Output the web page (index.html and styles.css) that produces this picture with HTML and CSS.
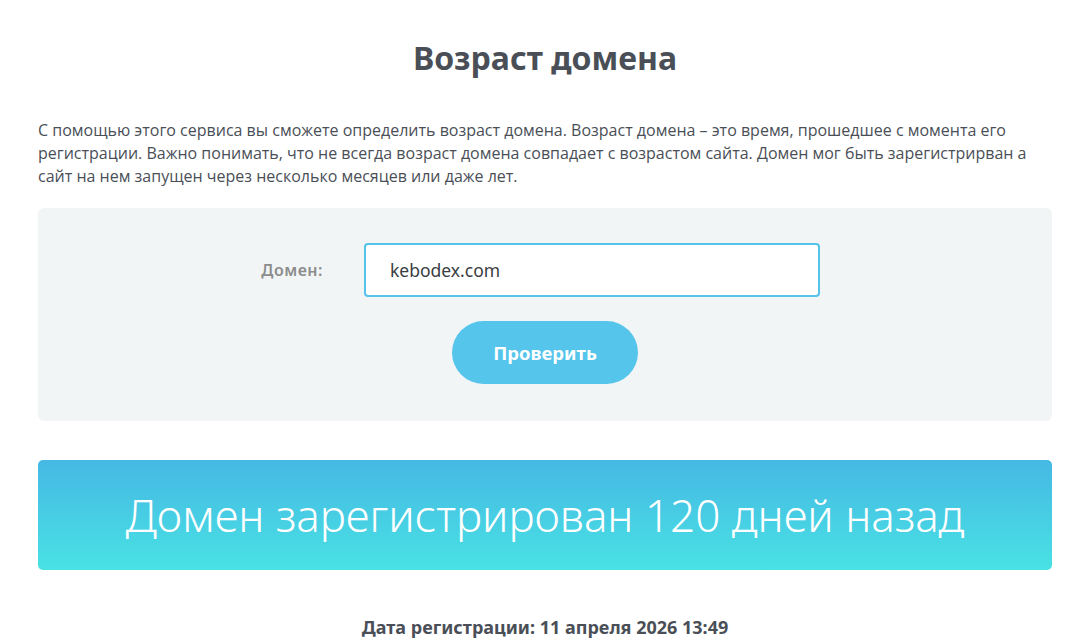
FILE: index.html
```html
<!DOCTYPE html>
<html lang="ru">
<head>
<meta charset="utf-8">
<link rel="stylesheet" href="styles.css">
</head>
<body>
<main class="page">
  <h1 class="title">Возраст домена</h1>
  <p class="intro">С помощью этого сервиса вы сможете определить возраст домена. Возраст домена – это время, прошедшее с момента его регистрации. Важно понимать, что не всегда возраст домена совпадает с возрастом сайта. Домен мог быть зарегистрирван а сайт на нем запущен через несколько месяцев или даже лет.</p>
  <form class="checker">
    <div class="field">
      <label class="label" for="domain">Домен:</label>
      <input class="input" id="domain" type="text" value="kebodex.com">
    </div>
    <button class="btn" type="button">Проверить</button>
  </form>
  <div class="result">Домен зарегистрирован 120 дней назад</div>
  <p class="date">Дата регистрации: 11 апреля 2026 13:49</p>
</main>
</body>
</html>
```
FILE: styles.css
```css
* { box-sizing: border-box; }
html, body { margin: 0; padding: 0; background: #fff; }
body { font-family: "Open Sans", "Noto Sans", sans-serif; color: #4a4f57; }
.page { width: 1014px; margin: 0 0 0 38px; padding-top: 37px; }
.title {
  margin: 0;
  text-align: center;
  font-family: "Noto Sans", sans-serif;
  font-weight: 700;
  font-size: 32px;
  line-height: 42px;
  color: #4a4f57;
}
.intro {
  margin: 40px 0 0;
  font-size: 16px;
  line-height: 23px;
}
.checker {
  margin-top: 20px;
  background: #f2f5f6;
  border-radius: 6px;
  height: 213px;
  padding-top: 35px;
  display: flex;
  flex-direction: column;
  align-items: center;
}
.field {
  width: 550px;
  display: flex;
  align-items: center;
  justify-content: flex-end;
}
.label {
  flex-shrink: 0;
  margin-right: 41px;
  font-family: "Noto Sans", sans-serif;
  font-weight: 600;
  font-size: 16px;
  letter-spacing: 0.5px;
  color: #8c8c8c;
}
.input {
  flex-shrink: 0;
  width: 456px;
  height: 54px;
  border: 2px solid #55c3ea;
  border-radius: 4px;
  padding: 0 24px;
  font-family: "Noto Sans", sans-serif;
  font-size: 17.5px;
  color: #3a3d42;
  background: #fff;
  outline: none;
}
.btn {
  margin-top: 24px;
  width: 186px;
  height: 63px;
  border: 0;
  border-radius: 32px;
  background: #55c5ec;
  color: #fff;
  font-family: "Noto Sans", sans-serif;
  font-weight: 700;
  font-size: 18.5px;
}
.result {
  margin-top: 39px;
  height: 110px;
  border-radius: 5px;
  background: linear-gradient(180deg, #46b8e4 0%, #48e2e4 100%);
  color: #fff;
  display: flex;
  align-items: center;
  justify-content: center;
  font-family: "Noto Sans", sans-serif;
  font-weight: 300;
  font-size: 44px;
}
.date {
  margin: 45px 0 0;
  text-align: center;
  font-family: "Noto Sans", sans-serif;
  font-weight: 700;
  font-size: 18px;
}
```
